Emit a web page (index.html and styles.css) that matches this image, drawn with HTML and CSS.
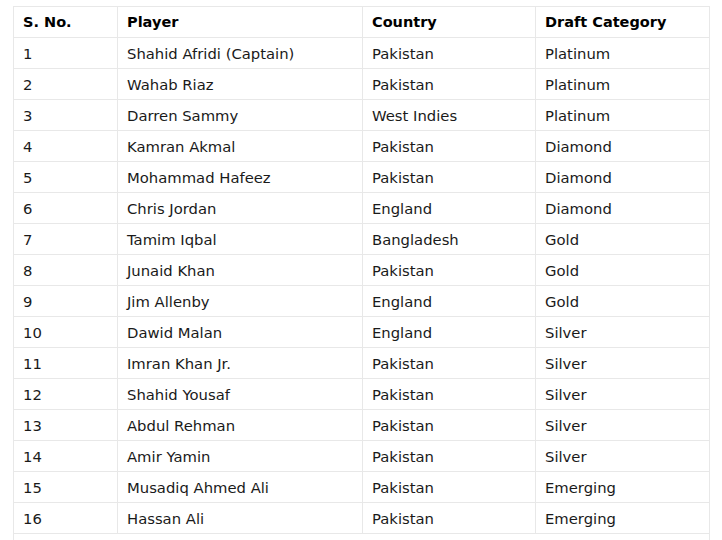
FILE: index.html
```html
<!DOCTYPE html>
<html>
<head>
<meta charset="utf-8">
<link rel="stylesheet" href="styles.css">
</head>
<body>
<table class="squad">
  <colgroup>
    <col class="c1"><col class="c2"><col class="c3"><col class="c4">
  </colgroup>
  <thead>
    <tr><th>S. No.</th><th>Player</th><th>Country</th><th>Draft Category</th></tr>
  </thead>
  <tbody>
    <tr><td>1</td><td>Shahid Afridi (Captain)</td><td>Pakistan</td><td>Platinum</td></tr>
    <tr><td>2</td><td>Wahab Riaz</td><td>Pakistan</td><td>Platinum</td></tr>
    <tr><td>3</td><td>Darren Sammy</td><td>West Indies</td><td>Platinum</td></tr>
    <tr><td>4</td><td>Kamran Akmal</td><td>Pakistan</td><td>Diamond</td></tr>
    <tr><td>5</td><td>Mohammad Hafeez</td><td>Pakistan</td><td>Diamond</td></tr>
    <tr><td>6</td><td>Chris Jordan</td><td>England</td><td>Diamond</td></tr>
    <tr><td>7</td><td>Tamim Iqbal</td><td>Bangladesh</td><td>Gold</td></tr>
    <tr><td>8</td><td>Junaid Khan</td><td>Pakistan</td><td>Gold</td></tr>
    <tr><td>9</td><td>Jim Allenby</td><td>England</td><td>Gold</td></tr>
    <tr><td>10</td><td>Dawid Malan</td><td>England</td><td>Silver</td></tr>
    <tr><td>11</td><td>Imran Khan Jr.</td><td>Pakistan</td><td>Silver</td></tr>
    <tr><td>12</td><td>Shahid Yousaf</td><td>Pakistan</td><td>Silver</td></tr>
    <tr><td>13</td><td>Abdul Rehman</td><td>Pakistan</td><td>Silver</td></tr>
    <tr><td>14</td><td>Amir Yamin</td><td>Pakistan</td><td>Silver</td></tr>
    <tr><td>15</td><td>Musadiq Ahmed Ali</td><td>Pakistan</td><td>Emerging</td></tr>
    <tr><td>16</td><td>Hassan Ali</td><td>Pakistan</td><td>Emerging</td></tr>
    <tr class="extra"><td colspan="4"></td></tr>
  </tbody>
</table>
</body>
</html>
```

FILE: styles.css
```css
html, body {
  margin: 0;
  padding: 0;
  background: #ffffff;
}
body {
  padding: 6px 0 0 13px;
  font-family: "DejaVu Sans", Verdana, sans-serif;
  font-size: 14.8px;
  color: #1a1a1a;
}
.squad {
  border-collapse: collapse;
  width: 696px;
  table-layout: fixed;
}
.c1 { width: 104px; }
.c2 { width: 245px; }
.c3 { width: 173px; }
.c4 { width: 174px; }
.squad th, .squad td {
  border: 1px solid #e8e8e8;
  height: 31px;
  padding: 0 9px;
  text-align: left;
  vertical-align: middle;
  white-space: nowrap;
  box-sizing: border-box;
}
.squad th {
  font-weight: bold;
  font-size: 14.5px;
  color: #000;
}
.squad td {
  line-height: 16px;
  padding-top: 2px;
}
```
